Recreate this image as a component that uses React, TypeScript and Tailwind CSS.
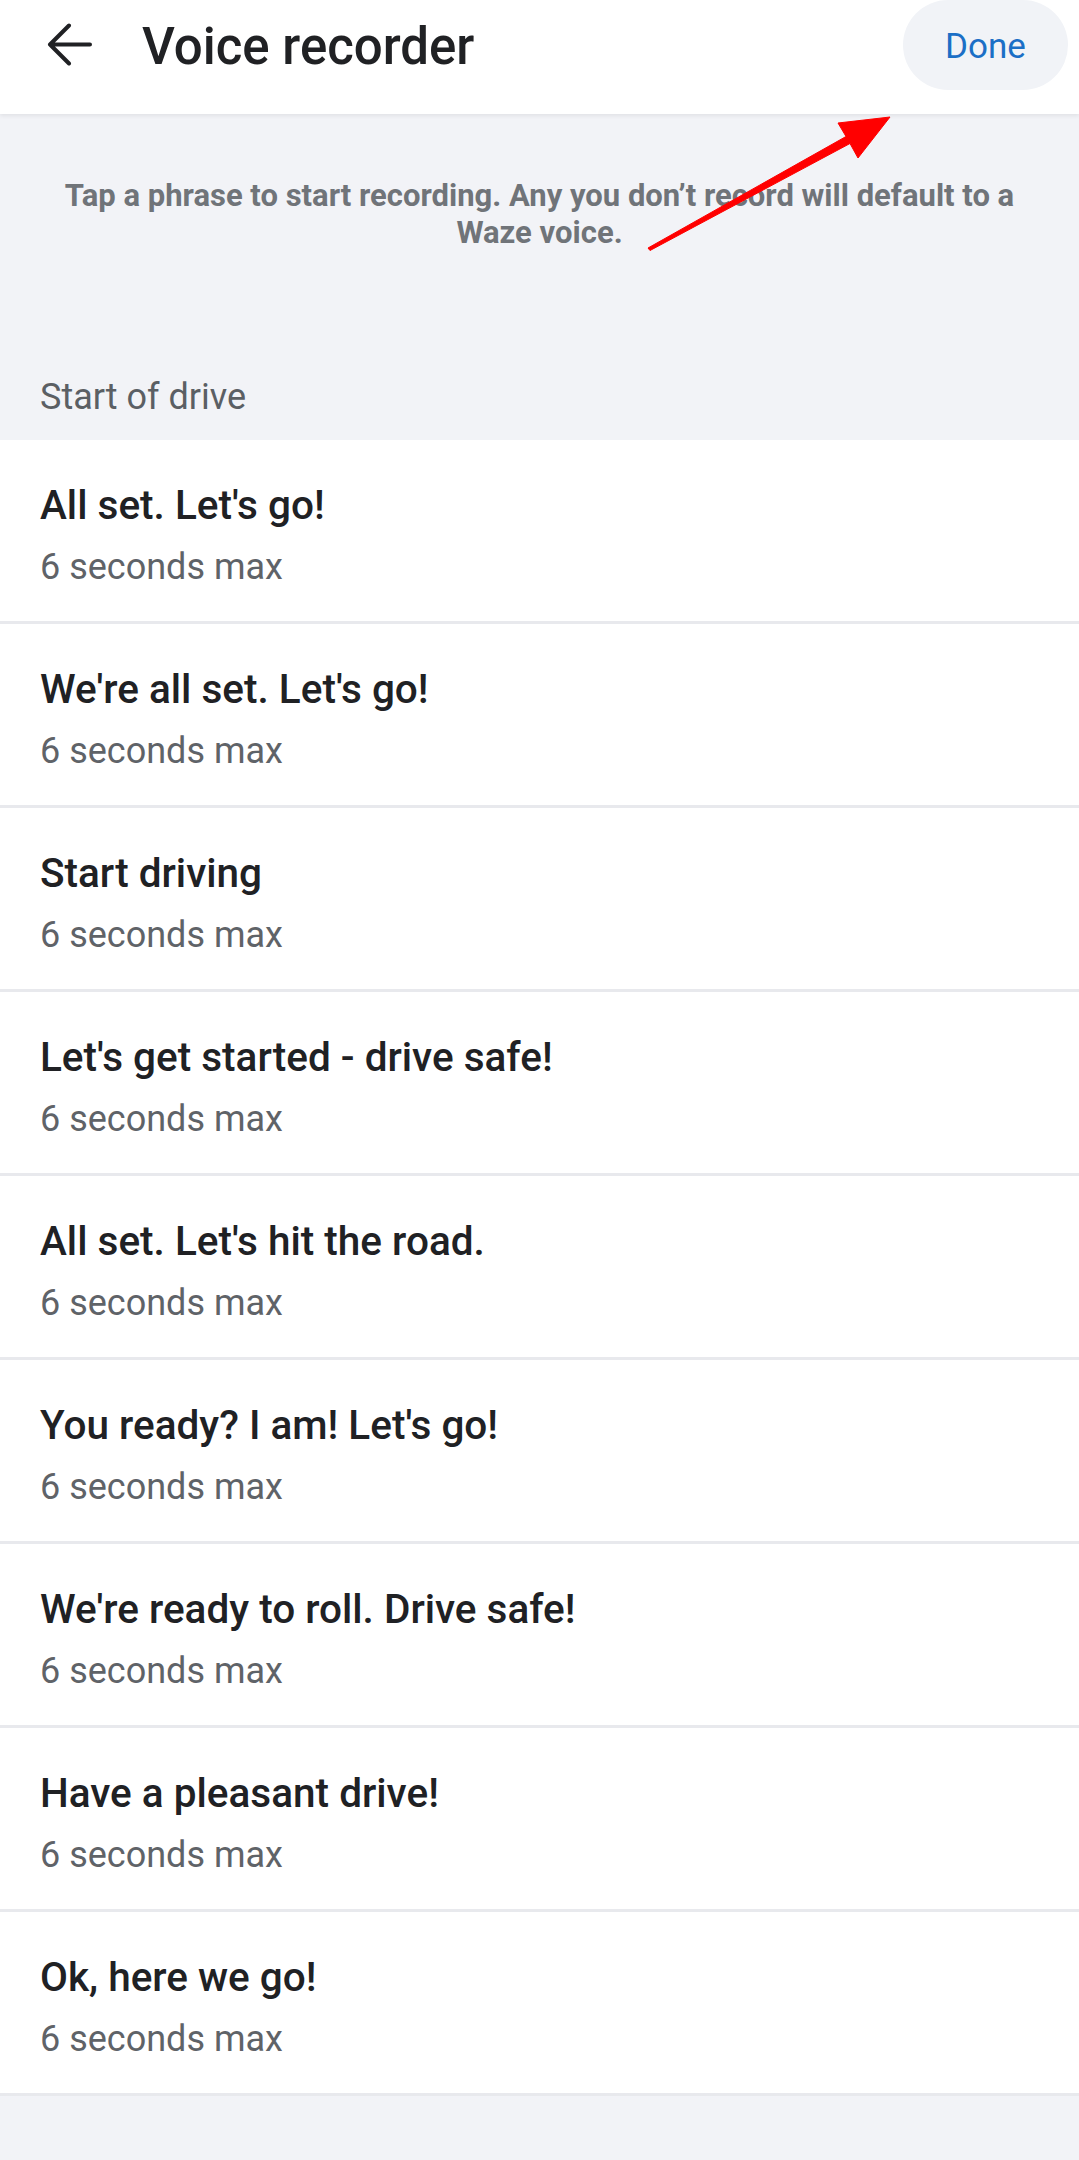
import React from "react";

const phrases = [
  "All set. Let's go!",
  "We're all set. Let's go!",
  "Start driving",
  "Let's get started - drive safe!",
  "All set. Let's hit the road.",
  "You ready? I am! Let's go!",
  "We're ready to roll. Drive safe!",
  "Have a pleasant drive!",
  "Ok, here we go!",
];

export default function App() {
  return (
    <div className="relative min-h-[2160px] bg-[#f2f3f7] font-['Roboto',sans-serif]">
      <header className="relative z-10 h-[114px] bg-white shadow-[0_2px_4px_rgba(0,0,0,0.07)]">
        <div className="flex h-[90px] items-center">
          <button className="ml-[47px] flex h-[44px] w-[46px] items-center justify-center">
            <svg width="46" height="44" viewBox="0 0 46 44" fill="none">
              <path
                d="M43 21.5H3M22 2.5L3 21.5L22 40.5"
                stroke="#202124"
                strokeWidth="4"
                strokeLinecap="round"
                strokeLinejoin="round"
              />
            </svg>
          </button>
          <h1 className="ml-[49px] pt-[3px] text-[51px] font-medium leading-none text-[#202124]">
            Voice recorder
          </h1>
          <button className="ml-auto mr-[11px] flex h-[90px] w-[165px] items-center justify-center rounded-full bg-[#f1f3f7] pt-[5px] text-[35px] text-[#1b6fc6]">
            Done
          </button>
        </div>
      </header>

      <div className="pt-[63px]">
        <p className="text-center text-[31px] font-bold leading-[37px] text-[#707479]">
          Tap a phrase to start recording. Any you don’t record will default to a
          <br />
          Waze voice.
        </p>
      </div>

      <div className="pb-[21px] pl-[40px] pt-[124px] text-[36px] leading-[44px] text-[#5b5f64]">
        Start of drive
      </div>

      <div className="bg-white">
        {phrases.map((p) => (
          <div
            key={p}
            className="border-b-[3px] border-[#e8e9ed] pb-[32px] pl-[40px] pt-[41px]"
          >
            <div className="text-[40.5px] font-medium leading-[48px] text-[#202124]">{p}</div>
            <div className="mt-[16px] text-[36px] leading-[44px] text-[#5f6368]">6 seconds max</div>
          </div>
        ))}
      </div>

      <svg
        className="pointer-events-none absolute left-0 top-0 z-20"
        width="1079"
        height="300"
        viewBox="0 0 1079 300"
      >
        <polygon
          points="648,248 846,136.5 838,123 890,117 858,158 850,143.5 650,250.5"
          fill="#ff0000"
          stroke="#ff0000"
          strokeWidth="1"
          strokeLinejoin="round"
        />
      </svg>
    </div>
  );
}
